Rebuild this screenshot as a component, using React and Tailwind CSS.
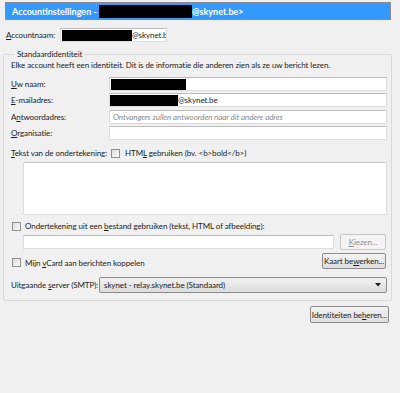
import React from "react";

const font = { fontFamily: 'Lato, "Open Sans", "Liberation Sans", sans-serif' };

function U({ children }) {
  return <span className="underline underline-offset-1">{children}</span>;
}

function Checkbox() {
  return (
    <span className="inline-block w-[9px] h-[9px] shrink-0 border border-[#8f8f8f] bg-gradient-to-br from-[#dcdcdc] to-[#fbfbfb]" />
  );
}

function Button({ children, disabled, className = "" }) {
  return (
    <div
      className={`flex items-center justify-center h-[16px] rounded-[2px] border text-[8px] ${
        disabled
          ? "border-[#c5c5c5] bg-[#f4f4f4] text-[#8d8d8d]"
          : "border-[#8a8a8a] bg-gradient-to-b from-[#f4f4f4] to-[#dedede] text-[#1b1b1b]"
      } ${className}`}
    >
      {children}
    </div>
  );
}

function Input({ children, className = "" }) {
  return (
    <div
      className={`h-[14px] bg-white border border-[#dcdcdc] border-t-[#bdbdbd] flex items-center overflow-hidden ${className}`}
    >
      {children}
    </div>
  );
}

function Row({ label, children, className = "" }) {
  return (
    <div className={`flex items-center ${className}`}>
      <div className="w-[98px] shrink-0">{label}</div>
      <div className="flex-1">{children}</div>
    </div>
  );
}

export default function App() {
  return (
    <div
      className="w-[400px] h-[393px] bg-[#f0f0f0] text-[8px] leading-[10px] tracking-[-0.08px] text-[#1b1b1b] overflow-hidden whitespace-nowrap"
      style={font}
    >
      <div className="pt-[2px] px-[5px]">
        <div className="w-[386px] h-[18px] bg-[#3399ff] border border-[#8a8a8a] border-t-2 flex items-center pl-[6px] text-white font-bold text-[9px] tracking-normal">
          <span>Accountinstellingen -&nbsp;</span>
          <span className="inline-block w-[93px] h-[13px] bg-black" />
          <span>@skynet.be&gt;</span>
        </div>
      </div>

      <div className="flex items-center mt-[8px] pl-[6px]">
        <div className="w-[54px]">
          <U>A</U>ccountnaam:
        </div>
        <Input className="w-[107px] pl-[1px]">
          <span className="inline-block w-[70px] h-[11px] bg-black shrink-0" />
          <span>@skynet.b</span>
        </Input>
      </div>

      <fieldset className="mx-[3px] mt-[7px] w-[389px] border border-[#d9d9d9] rounded-[2px] pl-[7px] pr-[4px] pb-[7px]">
        <legend className="ml-[4px] px-[2px]">Standaardidentiteit</legend>
        <div className="mt-[1px]">
          Elke account heeft een identiteit. Dit is de informatie die anderen zien als ze uw bericht lezen.
        </div>

        <Row
          className="mt-[7px]"
          label={
            <>
              <U>U</U>w naam:
            </>
          }
        >
          <Input className="pl-[1px]">
            <span className="inline-block w-[75px] h-[11px] bg-black" />
          </Input>
        </Row>
        <Row
          className="mt-[2px]"
          label={
            <>
              <U>E</U>-mailadres:
            </>
          }
        >
          <Input>
            <span className="inline-block w-[68px] h-[11px] bg-black" />
            <span>@skynet.be</span>
          </Input>
        </Row>
        <Row
          className="mt-[3px]"
          label={
            <>
              A<U>n</U>twoordadres:
            </>
          }
        >
          <Input className="border-[#8ec1ef] border-t-[#7bb3e8] pl-[3px]">
            <span className="italic text-[#8a8a8a]">Ontvangers zullen antwoorden naar dit andere adres</span>
          </Input>
        </Row>
        <Row
          className="mt-[2px]"
          label={
            <>
              <U>O</U>rganisatie:
            </>
          }
        >
          <Input />
        </Row>

        <Row
          className="mt-[8px]"
          label={
            <>
              <U>T</U>ekst van de ondertekening:
            </>
          }
        >
          <div className="flex items-center gap-[5px] pl-[2px]">
            <Checkbox />
            <span>
              HTM<U>L</U> gebruiken (bv. &lt;b&gt;bold&lt;/b&gt;)
            </span>
          </div>
        </Row>
        <div className="ml-[12px] mt-[4px] h-[53px] bg-white border border-[#dcdcdc] border-t-[#c8c8c8]" />

        <div className="flex items-center gap-[4px] mt-[6px] pl-[1px]">
          <Checkbox />
          <span>
            Ondertekening uit een <U>b</U>estand gebruiken (tekst, HTML of afbeelding):
          </span>
        </div>
        <div className="flex items-center ml-[12px] mt-[3px] gap-[6px] pr-[1px]">
          <Input className="flex-1" />
          <Button disabled className="w-[46px]">
            <span>
              <U>K</U>iezen...
            </span>
          </Button>
        </div>

        <div className="flex items-center justify-between mt-[3px] pl-[1px] pr-[1px]">
          <div className="flex items-center gap-[4px] mt-[3px]">
            <Checkbox />
            <span>
              Mijn <U>v</U>Card aan berichten koppelen
            </span>
          </div>
          <Button className="w-[64px]">
            <span>
              Kaart be<U>w</U>erken...
            </span>
          </Button>
        </div>

        <div className="flex items-center mt-[8px]">
          <div className="w-[88px] shrink-0">
            Uitgaande <U>s</U>erver (SMTP):
          </div>
          <div className="flex-1 h-[16px] rounded-[2px] border border-[#8a8a8a] bg-gradient-to-b from-[#f2f2f2] to-[#dcdcdc] flex items-center justify-between pl-[4px] pr-[5px]">
            <span>skynet - relay.skynet.be (Standaard)</span>
            <svg width="6" height="4" viewBox="0 0 6 4">
              <path d="M0 0 L6 0 L3 3.5 Z" fill="#1b1b1b" />
            </svg>
          </div>
        </div>
      </fieldset>

      <div className="flex justify-end pr-[11px] mt-[5px]">
        <Button className="w-[79px] h-[17px]">
          <span>
            Identiteiten be<U>h</U>eren...
          </span>
        </Button>
      </div>
    </div>
  );
}
